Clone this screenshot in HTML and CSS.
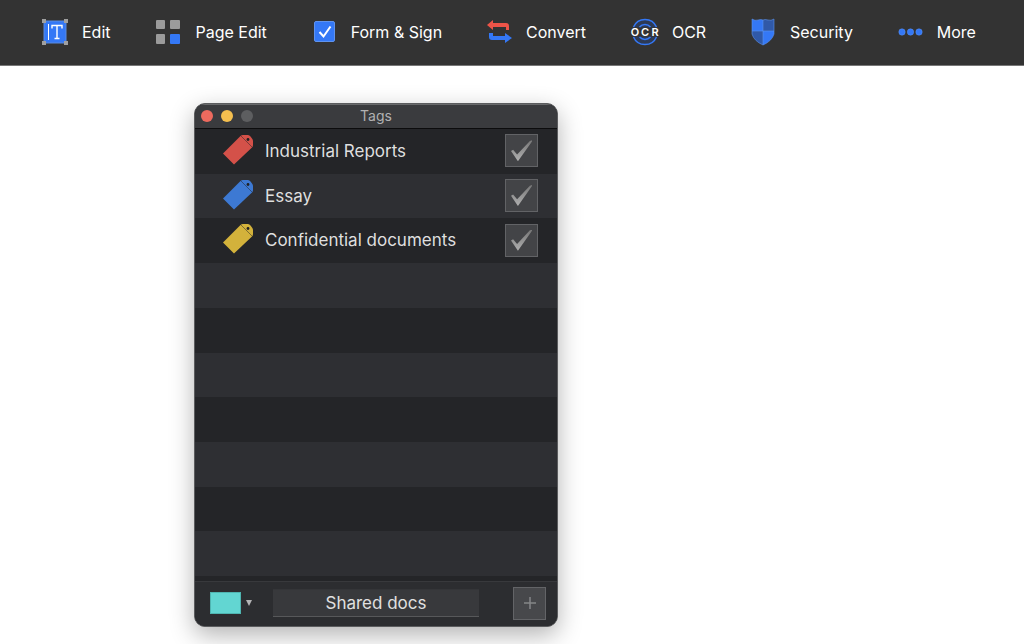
FILE: index.html
```html
<!DOCTYPE html>
<html lang="en">

<head>
    <meta charset="UTF-8">
    <meta name="viewport" content="width=device-width, initial-scale=1.0">
    <title>Tags</title>
    <link rel="stylesheet" href="styles.css">
</head>

<body>
    <nav class="toolbar">
        <button type="button" class="tool">
            <svg width="28" height="28" viewBox="0 0 28 28">
                <rect x="3" y="3" width="22" height="22" fill="#3478f6"/>
                <path d="M3 3h22v22H3z" fill="none" stroke="#5a8be0"/>
                <path d="M7.500 6v16" stroke="#fff"/>
                <path d="M11 10.500V7.500h10v3M16 7.500v13M13.500 20.500h5" fill="none" stroke="#fff" stroke-width="1.400"/>
                <path d="M1 1h4v4H1zM23 1h4v4h-4zM1 23h4v4H1zM23 23h4v4h-4z" fill="#a0a0a0"/>
            </svg>
            Edit
        </button>
        <button type="button" class="tool">
            <svg width="27" height="26" viewBox="0 0 27 26">
                <g fill="#9b9b9b">
                    <rect x="1" y="1" width="9" height="9" rx="1"/>
                    <rect x="15" y="1" width="10" height="9" rx="1"/>
                    <rect x="1" y="15" width="9" height="10" rx="1"/>
                </g>
                <rect x="15" y="15" width="10" height="10" rx="1" fill="#3478f6"/>
            </svg>
            Page Edit
        </button>
        <button type="button" class="tool">
            <svg width="26" height="26" viewBox="0 0 26 26">
                <rect x="2.500" y="2.500" width="20" height="20" rx="1.500" fill="#3478f6" stroke="#5f93ee"/>
                <path d="M7.500 13l4 4.500L18.500 7.500" fill="none" stroke="#fff" stroke-width="2"/>
            </svg>
            Form &amp; Sign
        </button>
        <button type="button" class="tool">
            <svg width="26" height="26" viewBox="0 0 26 26">
                <path d="M0 6l6-5v3h13q3 0 3 3v4h-3V8H6v3z" fill="#ee5448"/>
                <path d="M2 14h4v3h12v-3l7 5-7 5v-3H5q-3 0-3-3z" fill="#3478f6"/>
            </svg>
            Convert
        </button>
        <button type="button" class="tool">
            <svg width="28" height="28" viewBox="0 0 28 28">
                <circle cx="14" cy="14" r="12.500" fill="#2d3a55"/>
                <path d="M0 9.500h28v9H0z" fill="#333"/>
                <g fill="none" stroke="#3478f6" stroke-width="1.500">
                    <path d="M2.500 9a12.500 12.500 0 0 1 23 0M2.500 19a12.500 12.500 0 0 0 23 0"/>
                    <path d="M8.500 9a7.500 7.500 0 0 1 11 0M8.500 19a7.500 7.500 0 0 0 11 0"/>
                </g>
                <g class="ocr-text" text-anchor="middle">
                    <text x="4" y="18">O</text>
                    <text x="14" y="18">C</text>
                    <text x="24" y="18">R</text>
                </g>
            </svg>
            OCR
        </button>
        <button type="button" class="tool">
            <svg width="26" height="28" viewBox="0 0 26 28">
                <path d="M1 1q3 2 6 1 3-1 5 0v11H1z" fill="#3478f6"/>
                <path d="M12 2q2-1 5 0 3 1 6-1v12H12z" fill="#3059a8"/>
                <path d="M1 13h11v14Q3 23 1 16z" fill="#3059a8"/>
                <path d="M12 13h11v3q-2 7-11 11z" fill="#3478f6"/>
                <path d="M12 2v25M1 13h22M1 1q3 2 6 1 3-1 5 0 2-1 5 0 3 1 6-1v15q-2 7-11 11Q3 23 1 16z" fill="none" stroke="#5d94ef" stroke-width=".6"/>
            </svg>
            Security
        </button>
        <button type="button" class="tool">
            <svg width="26" height="26" viewBox="0 0 26 26">
                <g fill="#3478f6" stroke="#5b92f5" stroke-width=".5">
                    <circle cx="4" cy="13" r="3.200"/>
                    <circle cx="12.500" cy="13" r="3.200"/>
                    <circle cx="21" cy="13" r="3.200"/>
                </g>
            </svg>
            More
        </button>
    </nav>

    <svg class="defs" width="0" height="0">
        <symbol id="tag" viewBox="0 0 30 30">
            <path d="M0 18.500L17.500 1q1-1 2.500-1h5q1.500 0 2.500 1.500l1.500 2q1 1 1 2.500v4q0 1.500-1 2.500L11 29.500z" fill="currentColor"/>
            <path d="M18 1l11 11" stroke="#242528" stroke-opacity=".5"/>
            <circle cx="25" cy="4.500" r="1.400" fill="#202124"/>
        </symbol>
    </svg>

    <main class="window">
        <header class="titlebar">
            <div class="lights">
                <button type="button" class="light close" aria-label="Close"></button>
                <button type="button" class="light minimize" aria-label="Minimize"></button>
                <button type="button" class="light" aria-label="Zoom" disabled></button>
            </div>
            <h1>Tags</h1>
        </header>

        <ul class="tags">
            <li>
                <svg class="tag red"><use href="#tag"/></svg>
                <label for="reports">Industrial Reports</label>
                <input type="checkbox" id="reports" checked>
            </li>
            <li>
                <svg class="tag blue"><use href="#tag"/></svg>
                <label for="essay">Essay</label>
                <input type="checkbox" id="essay" checked>
            </li>
            <li>
                <svg class="tag yellow"><use href="#tag"/></svg>
                <label for="confidential">Confidential documents</label>
                <input type="checkbox" id="confidential" checked>
            </li>
            <li></li>
            <li></li>
            <li></li>
            <li></li>
            <li></li>
            <li></li>
            <li></li>
        </ul>

        <form class="new-tag">
            <button type="button" class="color" aria-label="Tag color">
                <span class="swatch"></span>
                <svg width="6" height="6" viewBox="0 0 6 6"><path d="M0 0h6L3 6z" fill="#b4b4b5"/></svg>
            </button>
            <input type="text" class="name" aria-label="Tag name" value="Shared docs">
            <button type="button" class="add" aria-label="Add tag">
                <svg width="12" height="12" viewBox="0 0 12 12"><path d="M6 0v12M0 6h12" stroke="#858688" stroke-width="1.500"/></svg>
            </button>
        </form>
    </main>
</body>

</html>
```

FILE: styles.css
```css
* {
    box-sizing: border-box;
}
body {
    margin: 0;
    background: #fff;
    font-family: Inter, "Liberation Sans", sans-serif;
}
button {
    padding: 0;
    border: none;
    background: none;
    font-family: inherit;
}
.toolbar {
    display: flex;
    justify-content: space-between;
    align-items: center;
    height: 66px;
    padding: 0 48px 2px 41px;
    background: #333;
    border-bottom: 1px solid #777;
}
.tool {
    display: flex;
    align-items: center;
    gap: 13px;
    color: #fff;
    font-size: 16px;
    line-height: 24px;
}
.tool svg {
    overflow: visible;
}
.ocr-text {
    fill: #fff;
    font-size: 11px;
    font-weight: 600;
}
.defs {
    position: absolute;
}

.window {
    width: 364px;
    margin: 37px 0 17px 194px;
    overflow: hidden;
    border: 1px solid #5b5c5e;
    border-radius: 11px;
    background: #242528;
    box-shadow: 0 8px 24px rgba(0, 0, 0, 0.3);
}
.titlebar {
    display: grid;
    grid-template-columns: 1fr auto 1fr;
    align-items: center;
    height: 25px;
    padding: 0 6px 1px;
    border-top: 1px solid #68696b;
    border-bottom: 1px solid #0c0c0d;
    background: #3a3b3e;
}
.lights {
    display: flex;
    gap: 8px;
}
.light {
    width: 12px;
    height: 12px;
    border-radius: 50%;
    background: #5d5e60;
}
.light.close {
    background: #ed6a5e;
}
.light.minimize {
    background: #f5bf4f;
}
h1 {
    margin: 0;
    color: #b1b1b2;
    font-size: 14px;
    font-weight: 400;
    line-height: 20px;
}

.tags {
    display: grid;
    grid-auto-rows: 1fr;
    height: 447px;
    margin: 0 0 5px;
    padding: 0;
    list-style: none;
}
.tags li {
    display: flex;
    align-items: center;
    padding: 0 19px 1px 28px;
}
.tags li:nth-child(even) {
    background: #2e2f33;
}
.tag {
    width: 30px;
    height: 30px;
    margin: 0 12px 2px 0;
}
.red {
    color: #d45149;
}
.blue {
    color: #3d79d3;
}
.yellow {
    color: #d3b23b;
}
.tags label {
    flex: 1;
    color: #dfdfdf;
    font-size: 17px;
    line-height: 24px;
}
.tags input {
    appearance: none;
    width: 33px;
    height: 33px;
    margin: 0;
    border: 1px solid #626366;
    background: #434447;
}
.tags input:checked::before {
    content: "";
    display: block;
    width: 21px;
    height: 21px;
    margin: 5px;
    background: linear-gradient(#777, #b0b0b0);
    clip-path: polygon(0 51%, 10% 45%, 29% 68%, 90% 3%, 100% 0, 100% 5%, 33% 100%);
}

.new-tag {
    display: flex;
    align-items: center;
    height: 45px;
    padding: 0 11px 2px 15px;
    border-top: 1px solid #38393c;
    background: #2c2d30;
}
.color {
    display: flex;
    align-items: center;
    gap: 5px;
    margin-right: 21px;
}
.swatch {
    width: 31px;
    height: 22px;
    border: 1px solid #4fb5b1;
    background: #62d6d2;
}
.name {
    flex: 1;
    min-width: 0;
    height: 28px;
    margin-right: 34px;
    padding: 0;
    border: none;
    border-top: 1px solid #343538;
    border-bottom: 1px solid #57585a;
    background: #38393c;
    color: #e0e0e0;
    font-family: inherit;
    font-size: 17px;
    text-align: center;
}
.add {
    display: flex;
    align-items: center;
    justify-content: center;
    width: 33px;
    height: 33px;
    border: 1px solid #636467;
    background: #47484b;
}
```
